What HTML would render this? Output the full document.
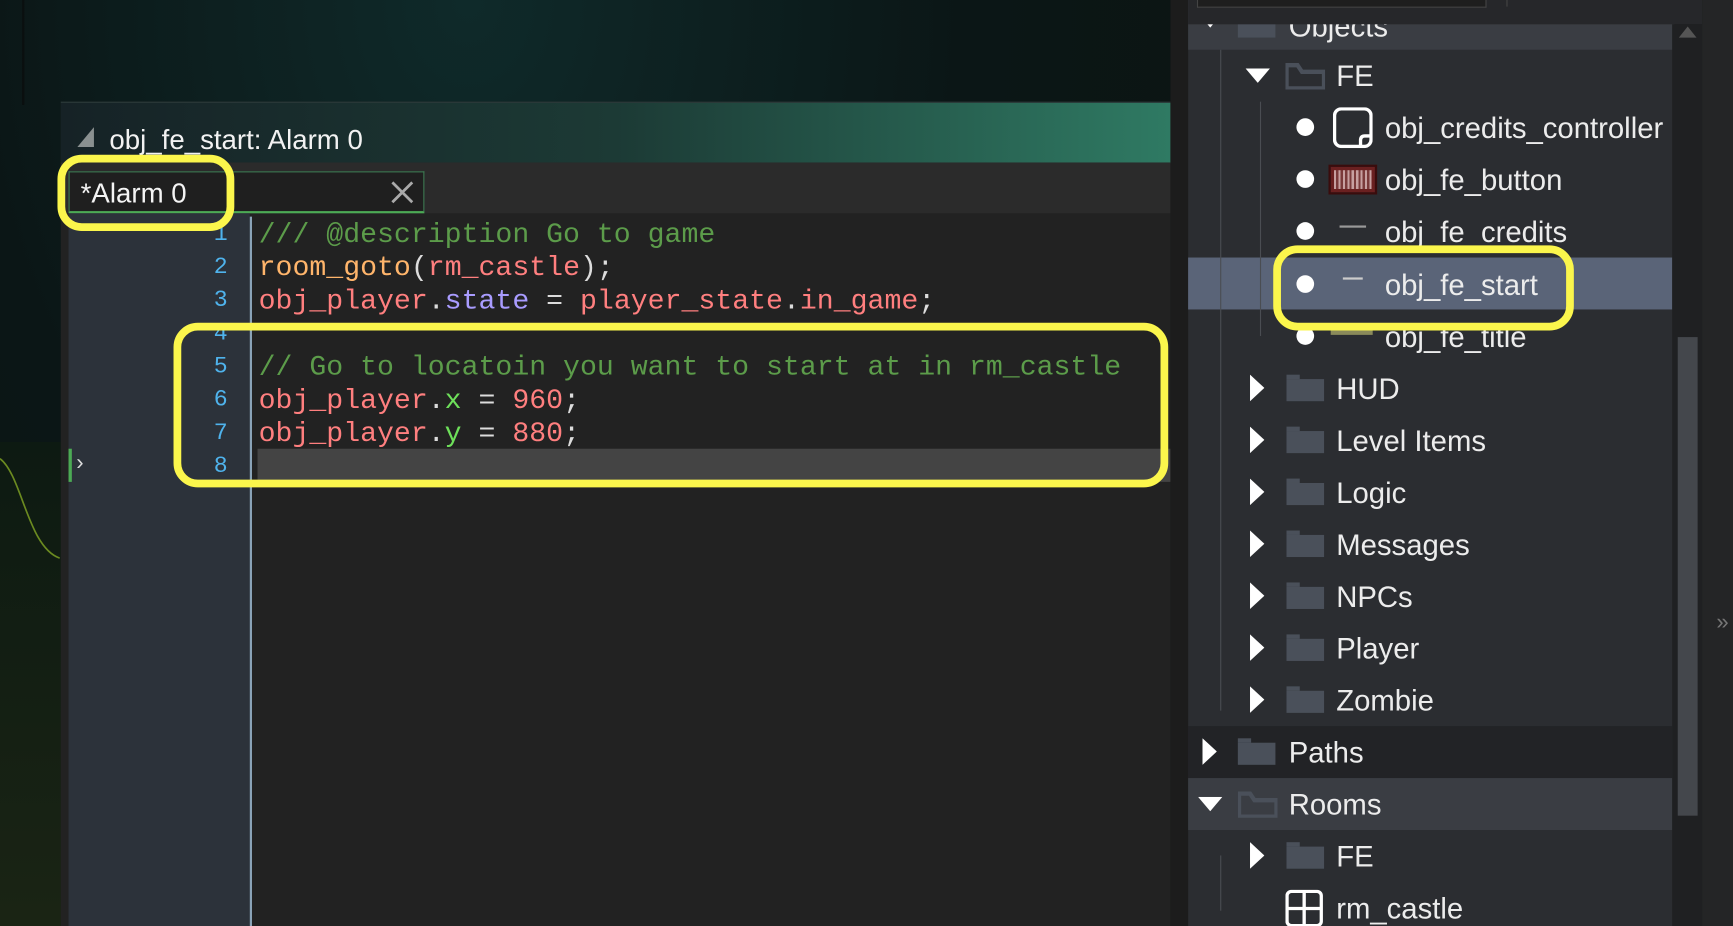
<!DOCTYPE html>
<html><head><meta charset="utf-8"><style>
html,body{margin:0;padding:0;width:1733px;height:926px;overflow:hidden;background:#111}
#s{position:absolute;left:0;top:0;width:1568px;height:838px;transform:scale(1.10523);transform-origin:0 0;overflow:hidden;font-family:"Liberation Sans","DejaVu Sans",sans-serif}
.a{position:absolute}
.code{font-family:"Liberation Mono","DejaVu Sans Mono",monospace;font-size:25.5px;white-space:pre;color:#dcdcdc;line-height:30px}
.ln{font-family:"Liberation Mono",monospace;font-size:21px;color:#4fb3ec;width:40px;text-align:right;line-height:30px}
.c{color:#5c9c4a}.o{color:#ffb56b}.r{color:#ff7f7f}.p{color:#a99cff}.g{color:#6ee05a}
.t{position:absolute;color:#ececec;font-size:26.5px;white-space:nowrap;line-height:47px}
.y{position:absolute;border:7px solid #fbf64c;border-radius:22px;box-sizing:border-box}
.dot{position:absolute;width:16px;height:16px;border-radius:50%;background:#fff}
.fold{position:absolute;width:34px;height:20px;background:#4a505a}
.fold:before{content:"";position:absolute;left:0;top:-4px;width:12px;height:4px;background:#4a505a}
</style></head><body><div id="s">
<div class="a" style="left:0;top:0;width:1060px;height:838px;background:radial-gradient(ellipse at 40% 0%,#0f2a2a 0%,#0b1616 50%,#0c1410 100%)"></div>
<div class="a" style="left:0;top:400px;width:56px;height:438px;background:linear-gradient(#0d1a12,#1a2414)"></div>
<div class="a" style="left:20px;top:0;width:2px;height:95px;background:#0a0f0f"></div>
<svg class="a" style="left:0;top:400px" width="56" height="120"><path d="M0 15 C20 30 25 95 54 105" stroke="#6b8a20" stroke-width="1.5" fill="none"/></svg>
<div class="a" style="left:55px;top:92px;width:1004px;height:746px;background:#222"></div>
<div class="a" style="left:55px;top:92px;width:1004px;height:55px;background:linear-gradient(90deg,#162226 0%,#1c3a35 50%,#2f7a63 100%);border-top:1px solid #2c3c3c"></div>
<svg class="a" style="left:70px;top:115px" width="18" height="20"><path d="M15 0 L15 18 L0 18 Z" fill="#8a9090"/></svg>
<div class="a" style="left:99px;top:113px;color:#f2f2f2;font-size:25px">obj_fe_start: Alarm 0</div>
<div class="a" style="left:55px;top:147px;width:1004px;height:46px;background:#2b2b2b"></div>
<div class="a" style="left:62px;top:155px;width:322px;height:38px;background:#1f1f1f;border:1px solid #3d7a52;border-bottom:2px solid #4caa55;box-sizing:border-box"></div>
<div class="a" style="left:73px;top:161px;color:#f4f4f4;font-size:25px">*Alarm 0</div>
<svg class="a" style="left:353px;top:163px" width="22" height="22"><path d="M2 2 L20 20 M20 2 L2 20" stroke="#aaa" stroke-width="2.5"/></svg>
<div class="a" style="left:62px;top:193px;width:164px;height:645px;background:#2c323a"></div>
<div class="a" style="left:226px;top:196px;width:2px;height:642px;background:#8aa3b8"></div>
<div class="a" style="left:62px;top:406px;width:3px;height:30px;background:#4caa55"></div>
<div class="a" style="left:69px;top:408px;color:#ddd;font-size:20px">›</div>
<div class="a" style="left:233px;top:406px;width:826px;height:30px;background:#444"></div>
<div class="a ln" style="left:166px;top:198px">1<br>2<br>3<br>4<br>5<br>6<br>7<br>8</div>
<div class="a code" style="left:234px;top:198px"><span class="c">/// @description Go to game</span>
<span class="o">room_goto</span>(<span class="r">rm_castle</span>);
<span class="r">obj_player</span>.<span class="p">state</span> = <span class="r">player_state</span>.<span class="r">in_game</span>;

<span class="c">// Go to locatoin you want to start at in rm_castle</span>
<span class="r">obj_player</span>.<span class="g">x</span> = <span class="r">960</span>;
<span class="r">obj_player</span>.<span class="g">y</span> = <span class="r">880</span>;</div>
<div class="y" style="left:52px;top:140px;width:160px;height:69px"></div>
<div class="y" style="left:157px;top:292px;width:900px;height:149px"></div>

<div class="a" style="left:1059px;top:0;width:16px;height:838px;background:#1c1c1c"></div>
<div class="a" style="left:1075px;top:0;width:440px;height:838px;background:#2b2d31"></div>
<div class="a" style="left:1075px;top:0;width:438px;height:45px;background:#3a3d43"></div>
<div class="a" style="left:1075px;top:233px;width:438px;height:47px;background:#5a6478"></div>
<div class="a" style="left:1075px;top:657px;width:438px;height:47px;background:#222326"></div>
<div class="a" style="left:1075px;top:704px;width:438px;height:47px;background:#3a3d43"></div>
<div class="a" style="left:1513px;top:22px;width:27px;height:816px;background:#1f2022"></div>
<div class="a" style="left:1518px;top:305px;width:18px;height:433px;background:#44474c"></div>
<svg class="a" style="left:1519px;top:24px" width="16" height="12"><path d="M8 0 L16 10 L0 10Z" fill="#555"/></svg>
<div class="a" style="left:1540px;top:0;width:28px;height:838px;background:#242526"></div>
<div class="a" style="left:1553px;top:552px;color:#777;font-size:20px">»</div>
<div class="a" style="left:1104px;top:45px;width:1px;height:598px;background:#4a4d52"></div>
<div class="a" style="left:1140px;top:92px;width:1px;height:212px;background:#4a4d52"></div>
<div class="a" style="left:1104px;top:774px;width:1px;height:50px;background:#4a4d52"></div>

<svg class="a" style="left:1086px;top:14px" width="18" height="12"><path d="M0 0 L18 0 L9 11Z" fill="#fff"/></svg>
<div class="fold" style="left:1120px;top:12px;height:22px"></div>
<div class="t" style="left:1166px;top:1px">Objects</div>
<div class="a" style="left:1075px;top:0;width:465px;height:22px;background:#26272a"></div>
<div class="a" style="left:1083px;top:0;width:260px;height:6px;border:1px solid #444;border-top:none;background:#1e1e1e"></div>
<div class="a" style="left:1363px;top:0;width:1px;height:6px;background:#444"></div>

<svg class="a" style="left:1127px;top:62px" width="22" height="13"><path d="M0 0 L22 0 L11 13Z" fill="#fff"/></svg>
<svg class="a" style="left:1163px;top:57px" width="36" height="24"><path d="M0 0 H12 L16 6 H36 V24 H0Z" fill="#4a505a"/><path d="M3 4 H10 L14 10 H33 V21 H3Z" fill="#2b2d31"/></svg>
<div class="t" style="left:1209px;top:46px">FE</div>

<div class="dot" style="left:1173px;top:107px"></div>
<svg class="a" style="left:1206px;top:97px" width="36" height="37"><rect x="1.5" y="1.5" width="33" height="34" rx="6" fill="none" stroke="#fff" stroke-width="3"/><path d="M34 26 H29 Q25 26 25 30 V35" fill="none" stroke="#fff" stroke-width="3"/></svg>
<div class="t" style="left:1253px;top:93px">obj_credits_controller</div>

<div class="dot" style="left:1173px;top:154px"></div>
<div class="a" style="left:1204px;top:151px;width:40px;height:23px;background:#6a2020;outline:2px solid #3a0c0c"><div style="margin:3px;height:17px;background:repeating-linear-gradient(90deg,#c7a0a0 0 2px,#7a3a3a 2px 4px)"></div></div>
<div class="t" style="left:1253px;top:140px">obj_fe_button</div>

<div class="dot" style="left:1173px;top:201px"></div>
<div class="a" style="left:1212px;top:204px;width:24px;height:2px;background:#999"></div>
<div class="t" style="left:1253px;top:187px">obj_fe_credits</div>

<div class="dot" style="left:1173px;top:249px"></div>
<div class="a" style="left:1215px;top:251px;width:18px;height:2px;background:#ccc"></div>
<div class="t" style="left:1253px;top:235px">obj_fe_start</div>

<div class="dot" style="left:1173px;top:296px"></div>
<div class="a" style="left:1204px;top:299px;width:38px;height:4px;background:#8a8a5a"></div>
<div class="t" style="left:1253px;top:282px">obj_fe_title</div>
<div class="y" style="left:1152px;top:222px;width:272px;height:77px"></div>

<svg class="a" style="left:1131px;top:339px" width="13" height="24"><path d="M0 0 L13 12 L0 24Z" fill="#fff"/></svg><div class="fold" style="left:1164px;top:343px"></div><div class="t" style="left:1209px;top:329px">HUD</div>
<svg class="a" style="left:1131px;top:386px" width="13" height="24"><path d="M0 0 L13 12 L0 24Z" fill="#fff"/></svg><div class="fold" style="left:1164px;top:390px"></div><div class="t" style="left:1209px;top:376px">Level Items</div>
<svg class="a" style="left:1131px;top:433px" width="13" height="24"><path d="M0 0 L13 12 L0 24Z" fill="#fff"/></svg><div class="fold" style="left:1164px;top:437px"></div><div class="t" style="left:1209px;top:423px">Logic</div>
<svg class="a" style="left:1131px;top:480px" width="13" height="24"><path d="M0 0 L13 12 L0 24Z" fill="#fff"/></svg><div class="fold" style="left:1164px;top:484px"></div><div class="t" style="left:1209px;top:470px">Messages</div>
<svg class="a" style="left:1131px;top:527px" width="13" height="24"><path d="M0 0 L13 12 L0 24Z" fill="#fff"/></svg><div class="fold" style="left:1164px;top:531px"></div><div class="t" style="left:1209px;top:517px">NPCs</div>
<svg class="a" style="left:1131px;top:574px" width="13" height="24"><path d="M0 0 L13 12 L0 24Z" fill="#fff"/></svg><div class="fold" style="left:1164px;top:578px"></div><div class="t" style="left:1209px;top:564px">Player</div>
<svg class="a" style="left:1131px;top:621px" width="13" height="24"><path d="M0 0 L13 12 L0 24Z" fill="#fff"/></svg><div class="fold" style="left:1164px;top:625px"></div><div class="t" style="left:1209px;top:611px">Zombie</div>
<svg class="a" style="left:1088px;top:668px" width="13" height="24"><path d="M0 0 L13 12 L0 24Z" fill="#fff"/></svg><div class="fold" style="left:1120px;top:672px"></div><div class="t" style="left:1166px;top:658px">Paths</div>
<svg class="a" style="left:1084px;top:721px" width="22" height="13"><path d="M0 0 L22 0 L11 13Z" fill="#fff"/></svg>
<svg class="a" style="left:1120px;top:716px" width="36" height="24"><path d="M0 0 H12 L16 6 H36 V24 H0Z" fill="#4a505a"/><path d="M3 4 H10 L14 10 H33 V21 H3Z" fill="#3a3d43"/></svg>
<div class="t" style="left:1166px;top:705px">Rooms</div>
<svg class="a" style="left:1131px;top:762px" width="13" height="24"><path d="M0 0 L13 12 L0 24Z" fill="#fff"/></svg><div class="fold" style="left:1164px;top:766px"></div><div class="t" style="left:1209px;top:752px">FE</div>
<svg class="a" style="left:1163px;top:805px" width="34" height="34"><rect x="1.5" y="1.5" width="31" height="31" rx="4" fill="none" stroke="#fff" stroke-width="3"/><path d="M17 2 V32 M2 17 H32" stroke="#fff" stroke-width="3"/></svg>
<div class="t" style="left:1209px;top:799px">rm_castle</div>
</div></body></html>
